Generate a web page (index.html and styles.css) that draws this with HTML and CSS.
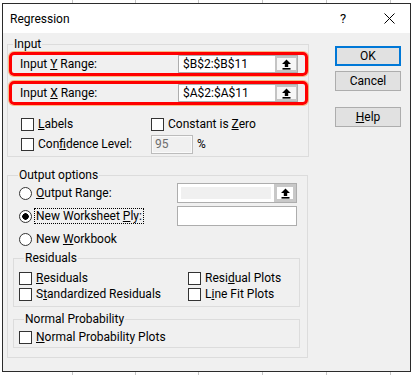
FILE: index.html
```html
<!DOCTYPE html>
<html lang="en">
<head>
    <meta charset="UTF-8">
    <meta name="viewport" content="width=device-width, initial-scale=1.0">
    <title>Regression</title>
    <link rel="stylesheet" href="styles.css">
</head>
<body>
    <div class="sheet-strip"></div>
    <div class="dialog">
        <div class="titlebar">
            <span class="title">Regression</span>
            <span class="title-btn help">?</span>
            <span class="title-btn close">
                <svg width="11" height="11" viewBox="0 0 11 11"><path d="M0.5 0.5 L10.5 10.5 M10.5 0.5 L0.5 10.5" stroke="#000" stroke-width="1"/></svg>
            </span>
        </div>
        <div class="dialog-body">
            <div class="main">
                <fieldset class="group input-group">
                    <legend>Input</legend>
                    <div class="highlight">
                        <span>Input <u>Y</u> Range:</span>
                        <div class="ref-box">
                            <span class="ref-text">$B$2:$B$11</span>
                            <span class="ref-btn">
                                <svg width="11" height="11" viewBox="0 0 11 11"><path d="M5.5 0.5 L1 5 H3.8 V8 H7.2 V5 H10 Z"/><rect x="1.5" y="9" width="8" height="1.6"/></svg>
                            </span>
                        </div>
                    </div>
                    <div class="highlight second">
                        <span>Input <u>X</u> Range:</span>
                        <div class="ref-box">
                            <span class="ref-text">$A$2:$A$11</span>
                            <span class="ref-btn">
                                <svg width="11" height="11" viewBox="0 0 11 11"><path d="M5.5 0.5 L1 5 H3.8 V8 H7.2 V5 H10 Z"/><rect x="1.5" y="9" width="8" height="1.6"/></svg>
                            </span>
                        </div>
                    </div>
                    <div class="check-grid input-checks">
                        <label class="check"><span class="box"></span><span><u>L</u>abels</span></label>
                        <label class="check"><span class="box"></span><span>Constant is <u>Z</u>ero</span></label>
                        <label class="check"><span class="box"></span><span>Con<u>f</u>idence Level:</span></label>
                        <div class="level">
                            <span class="num-field">95</span>
                            <span>%</span>
                        </div>
                    </div>
                </fieldset>

                <fieldset class="group output-group">
                    <legend>Output options</legend>
                    <div class="radio-grid">
                        <label class="radio"><span class="dot"></span><span><u>O</u>utput Range:</span></label>
                        <div class="ref-box disabled">
                            <span class="ref-text"><span class="ref-fill"></span></span>
                            <span class="ref-btn">
                                <svg width="11" height="11" viewBox="0 0 11 11"><path d="M5.5 0.5 L1 5 H3.8 V8 H7.2 V5 H10 Z"/><rect x="1.5" y="9" width="8" height="1.6"/></svg>
                            </span>
                        </div>
                        <label class="radio"><span class="dot checked"></span><span class="focused">New Worksheet <u>P</u>ly:</span></label>
                        <div class="text-box"></div>
                        <label class="radio"><span class="dot"></span><span>New <u>W</u>orkbook</span></label>
                    </div>

                    <fieldset class="group sub-group residuals">
                        <legend>Residuals</legend>
                        <div class="check-grid small-checks">
                            <label class="check"><span class="box"></span><span><u>R</u>esiduals</span></label>
                            <label class="check"><span class="box"></span><span>Resi<u>d</u>ual Plots</span></label>
                            <label class="check"><span class="box"></span><span>S<u>t</u>andardized Residuals</span></label>
                            <label class="check"><span class="box"></span><span>L<u>i</u>ne Fit Plots</span></label>
                        </div>
                    </fieldset>

                    <fieldset class="group sub-group probability">
                        <legend>Normal Probability</legend>
                        <div class="check-grid small-checks">
                            <label class="check"><span class="box"></span><span><u>N</u>ormal Probability Plots</span></label>
                        </div>
                    </fieldset>
                </fieldset>
            </div>
            <div class="buttons">
                <button class="btn default">OK</button>
                <button class="btn cancel">Cancel</button>
                <button class="btn help-btn"><u>H</u>elp</button>
            </div>
        </div>
    </div>
    <div class="sheet-strip"></div>
</body>
</html>
```

FILE: styles.css
```css
* {
    box-sizing: border-box;
}
body {
    margin: 0;
    background: #fff;
    font-family: Roboto, 'Segoe UI', sans-serif;
    font-size: 12px;
    color: #000;
}
.sheet-strip {
    height: 3px;
    background: linear-gradient(to right,
        transparent 72px, #c6c6c6 72px 73px,
        transparent 73px 135px, #c6c6c6 135px 136px,
        transparent 136px 198px, #c6c6c6 198px 199px,
        transparent 199px 262px, #c6c6c6 262px 263px,
        transparent 263px 326px, #c6c6c6 326px 327px,
        transparent 327px 390px, #c6c6c6 390px 391px,
        transparent 391px);
}
.dialog {
    margin: 0 1px 0 2px;
    border: 1px solid #2b2b2b;
    background: #f0f0f0;
}
.titlebar {
    display: flex;
    align-items: center;
    height: 29px;
    padding-left: 7px;
    background: #fff;
}
.title {
    flex: 1;
}
.title-btn {
    display: flex;
    align-items: center;
    justify-content: center;
    width: 16px;
}
.help {
    font-size: 13px;
}
.close {
    margin: 0 13px 0 30px;
}
.dialog-body {
    display: flex;
    height: 338px;
    padding: 3px 0 0 4px;
}
.main {
    width: 302px;
}

/* group boxes */
.group {
    margin: 0;
    padding: 0;
    border: 1px solid #dcdcdc;
    min-width: 0;
}
.group legend {
    margin-left: 5px;
    padding: 0 1px;
    line-height: 16px;
}
.input-group {
    width: 302px;
    padding-bottom: 2px;
}
.highlight {
    display: flex;
    align-items: center;
    justify-content: space-between;
    height: 24px;
    margin-left: 1px;
    padding: 0 7px 0 8px;
    border: 3px solid #f00;
    border-radius: 5px;
    box-shadow: 0 0 0 1px rgba(255, 120, 0, 0.45);
}
.highlight.second {
    margin-top: 5px;
}
.ref-box {
    display: flex;
    width: 120px;
    height: 18px;
    border: 1px solid #adadad;
    background: #fff;
}
.ref-text {
    flex: 1;
    padding-left: 4px;
    line-height: 16px;
}
.ref-btn {
    display: flex;
    align-items: center;
    justify-content: center;
    width: 22px;
    border: 2px solid #c4c4c4;
    border-right-width: 1px;
    background: #f7f7f7;
}
.ref-btn svg {
    fill: #000;
}
.ref-box.disabled {
    height: 20px;
}
.ref-box.disabled .ref-text {
    padding: 3px;
}
.ref-fill {
    display: block;
    height: 100%;
    background: #f0f0f0;
}
.ref-box.disabled .ref-btn {
    border: 3px solid #c8c8c8;
    background: #fff;
}
.text-box {
    width: 120px;
    height: 20px;
    border: 1px solid #adadad;
    background: #fff;
}

/* checkboxes and radios */
.check-grid {
    display: grid;
    align-items: center;
}
.input-checks {
    grid-template-columns: 130px auto;
    grid-auto-rows: 20px;
    margin-top: 9px;
    padding-left: 13px;
}
.small-checks {
    grid-template-columns: 169px auto;
    grid-auto-rows: 16px;
}
.check, .radio {
    display: flex;
    align-items: center;
    gap: 4px;
}
.box {
    width: 13px;
    height: 13px;
    border: 1px solid #333;
    background: #fff;
}
.dot {
    width: 13px;
    height: 13px;
    border: 1px solid #333;
    border-radius: 50%;
    background: #fff;
}
.dot.checked {
    background: radial-gradient(circle, #000 0 3px, #fff 3.5px);
}
.focused {
    outline: 1px dotted #000;
    padding: 0 1px;
    margin-left: -1px;
}
.level {
    display: flex;
    align-items: center;
    gap: 4px;
}
.num-field {
    width: 42px;
    height: 19px;
    padding-left: 3px;
    line-height: 17px;
    border: 1px solid #bcbcbc;
    box-shadow: inset 0 0 0 1px #fafafa;
    background: #f0f0f0;
    color: #6d6d6d;
}

.output-group {
    width: 301px;
    margin-top: 10px;
    padding: 0 8px 9px 5px;
}
.radio-grid {
    display: grid;
    grid-template-columns: 158px 120px;
    grid-auto-rows: 20px;
    row-gap: 3px;
    align-items: center;
    padding-left: 6px;
}
.sub-group {
    width: 287px;
}
.residuals {
    margin-top: 1px;
    padding: 4px 0 4px 5px;
}
.probability {
    margin-top: 4px;
    padding: 2px 0 2px 5px;
}

/* buttons */
.buttons {
    display: flex;
    flex-direction: column;
    width: 66px;
    margin: 10px 0 0 26px;
}
.btn {
    height: 20px;
    padding: 0;
    border: 1px solid #adadad;
    background: #e1e1e1;
    font-family: inherit;
    font-size: 12px;
    color: #000;
}
.btn.default {
    border: 2px solid #0078d7;
}
.cancel {
    margin-top: 5px;
}
.help-btn {
    margin-top: 16px;
}
```
